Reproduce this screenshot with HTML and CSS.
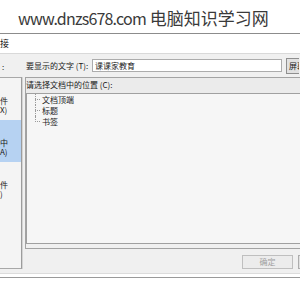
FILE: index.html
```html
<!DOCTYPE html>
<html lang="zh-CN">
<head>
<meta charset="utf-8">
<title>插入超链接</title>
<link rel="stylesheet" href="styles.css">
</head>
<body>
<header class="site"><span class="latin">www.dnzs678.com</span> 电脑知识学习网</header>
<div class="dialog">
  <div class="titlebar">接</div>
  <div class="dlg-body">
    <div class="side-label">:</div>
    <div class="row1">
      <label class="field-label">要显示的文字 (<u>T</u>):</label>
      <div class="input">课课家教育</div>
      <button class="btn tip">屏幕提示</button>
    </div>
    <ul class="linkto">
      <li class="item">件<br>X)</li>
      <li class="item selected">中<br>A)</li>
      <li class="item">件<br>)</li>
      <li class="item"></li>
    </ul>
    <div class="group">
      <div class="group-label">请选择文档中的位置 (<u>C</u>):</div>
      <div class="listbox">
        <ul class="tree">
          <li>文档顶端</li>
          <li>标题</li>
          <li>书签</li>
        </ul>
      </div>
    </div>
    <div class="actions">
      <button class="btn disabled">确定</button>
      <button class="btn">取消</button>
    </div>
  </div>
</div>
</body>
</html>
```
FILE: styles.css
```css
html, body {
  margin: 0;
  padding: 0;
  background: #ffffff;
  overflow: hidden;
  width: 300px;
  height: 300px;
}

body {
  font-family: "Noto Sans CJK SC", sans-serif;
}

.site {
  height: 33px;
  border-bottom: 1px solid #8c8c8c;
  box-sizing: content-box;
  padding-left: 18px;
  font-family: "Noto Sans CJK SC", sans-serif;
  font-size: 17px;
  line-height: 36px;
  color: #3a3a3a;
  white-space: nowrap;
}

.latin {
  font-size: 16px;
  letter-spacing: -0.8px;
}

.dialog {
  background: #ffffff;
  padding-bottom: 3px;
  border-bottom: 1px solid #9a9a9a;
}

.titlebar {
  height: 19px;
  border-bottom: 1px solid #d9d9d9;
  font-size: 9px;
  line-height: 19px;
  color: #111;
}

.dlg-body {
  background: #f0f0f0;
  display: grid;
  grid-template-columns: 22px 1fr;
  grid-template-rows: 23px 172px 20px;
  column-gap: 3px;
  padding-bottom: 4px;
  border-bottom: 1px solid #dcdcdc;
  font-size: 8px;
  color: #1a1a1a;
}

.side-label {
  grid-column: 1;
  grid-row: 1;
  padding-left: 2px;
  line-height: 25px;
}

.row1 {
  grid-column: 2;
  grid-row: 1;
  display: flex;
  align-items: center;
  white-space: nowrap;
  overflow: hidden;
}

.field-label {
  width: 67px;
  padding-left: 1px;
  box-sizing: border-box;
  line-height: 10px;
  margin-top: 1px;
}

u {
  text-decoration: none;
}

.input {
  width: 190px;
  height: 13px;
  box-sizing: border-box;
  border: 1px solid #acacac;
  background: #ffffff;
  padding-left: 2px;
  line-height: 11px;
  font-size: 8px;
  flex: none;
}

.btn {
  font-family: "Noto Sans CJK SC", sans-serif;
  font-size: 8px;
  color: #1a1a1a;
  background: #e1e1e1;
  border: 1px solid #adadad;
  padding: 0 3px;
  height: 14px;
  line-height: 12px;
  white-space: nowrap;
  flex: none;
}

.tip {
  margin-left: 4px;
  height: 16px;
  border-color: #8f8f8f;
  padding-left: 2px;
  width: 13px;
  overflow: hidden;
  text-align: left;
  border-right: none;
}

.linkto {
  grid-column: 1;
  grid-row: 2 / 4;
  list-style: none;
  margin: 0;
  padding: 0;
  background: #f4f4f4;
  border-top: 1px solid #a8a8a8;
  border-bottom: 1px solid #a8a8a8;
  border-right: 1px solid #9c9c9c;
  box-shadow: 1px 0 0 #d4d4d4;
  overflow: hidden;
}

.item {
  height: 42px;
  box-sizing: border-box;
  padding-top: 18px;
  line-height: 9px;
  white-space: nowrap;
}

.item.selected {
  background: #b6d2f2;
}

.group {
  grid-column: 2;
  grid-row: 2;
  border: 1px solid #a3a3a3;
  border-right: none;
  display: flex;
  flex-direction: column;
  min-width: 0;
}

.group-label {
  height: 15px;
  background: #ebebeb;
  line-height: 14px;
  white-space: nowrap;
}

.listbox {
  height: 151px;
  box-sizing: border-box;
  border: 1px solid #a0a0a0;
  border-right: none;
  background: #f6f6f6;
}

.tree {
  list-style: none;
  margin: 0;
  padding: 0 0 0 15px;
}

.tree li {
  position: relative;
  height: 11px;
  line-height: 11px;
  white-space: nowrap;
}

.tree li::before {
  content: "";
  position: absolute;
  left: -7px;
  top: 0;
  height: 11px;
  border-left: 1px dotted #9a9a9a;
}

.tree li:last-child::before {
  height: 6px;
}

.tree li::after {
  content: "";
  position: absolute;
  left: -7px;
  top: 5px;
  width: 5px;
  border-top: 1px dotted #9a9a9a;
}

.actions {
  grid-column: 2;
  grid-row: 3;
  display: flex;
  align-items: flex-end;
  padding-left: 217px;
  gap: 5px;
  overflow: hidden;
}

.actions .btn {
  width: 51px;
  flex: none;
}

.actions .btn:last-child {
  width: 3px;
  padding: 0;
  border-right: none;
  overflow: hidden;
  color: transparent;
}

.btn.disabled {
  background: #ececec;
  border-color: #bfbfbf;
  color: #a0a0a0;
}
```
